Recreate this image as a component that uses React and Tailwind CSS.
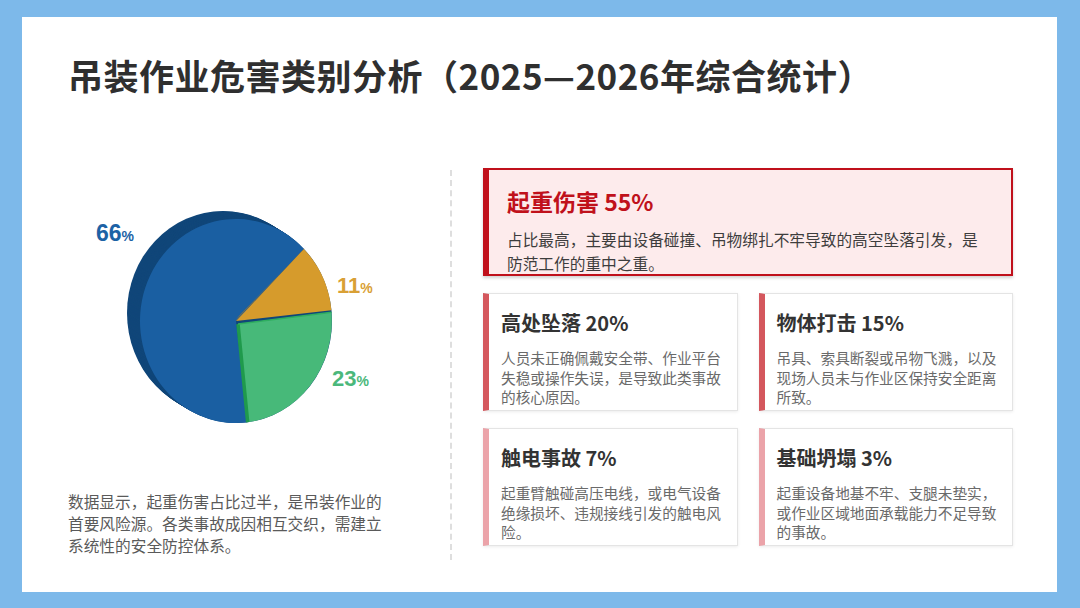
export default function App() {
  const cx = 236, cy = 321, rx = 96, ry = 102;
  const P = (deg) => {
    const t = (deg * Math.PI) / 180;
    return [cx + rx * Math.cos(t), cy + ry * Math.sin(t)];
  };
  const [a1x, a1y] = P(-45);
  const [a2x, a2y] = P(-6);
  const [a3x, a3y] = P(83);
  const steps = Array.from({ length: 14 }, (_, i) => i);

  const cards = [
    {
      t: "高处坠落 20%",
      d: ["人员未正确佩戴安全带、作业平台", "失稳或操作失误，是导致此类事故", "的核心原因。"],
      c: "border-l-[#d4575d]",
    },
    {
      t: "物体打击 15%",
      d: ["吊具、索具断裂或吊物飞溅，以及", "现场人员未与作业区保持安全距离", "所致。"],
      c: "border-l-[#d4575d]",
    },
    {
      t: "触电事故 7%",
      d: ["起重臂触碰高压电线，或电气设备", "绝缘损坏、违规接线引发的触电风", "险。"],
      c: "border-l-[#eba3a9]",
    },
    {
      t: "基础坍塌 3%",
      d: ["起重设备地基不牢、支腿未垫实，", "或作业区域地面承载能力不足导致", "的事故。"],
      c: "border-l-[#eba3a9]",
    },
  ];

  return (
    <div className="w-[1080px] h-[608px] bg-[#7db9ea] pt-[17px] pl-[22px] font-['Noto_Sans_CJK_SC','Noto_Sans',sans-serif]">
      <div className="w-[1035px] h-[575px] bg-white flex flex-col">
        <div className="pl-[46px] pt-[35px] text-[35px] leading-[46px] tracking-[0.5px] font-bold text-[#2f2f2f] whitespace-nowrap">
          吊装作业危害类别分析（2025—2026年综合统计）
        </div>
        <div className="mt-[70px] flex">
          <div className="w-[428px] flex flex-col">
            <svg
              className="ml-[38px] mt-[22px] w-[340px] h-[250px]"
              viewBox="60 190 340 250"
            >
              {steps.map((i) => (
                <ellipse
                  key={i}
                  cx={cx - 13 + i}
                  cy={cy - 8 + (i * 8) / 13}
                  rx={rx}
                  ry={ry}
                  fill="#104679"
                />
              ))}
              <path
                d={`M${cx} ${cy} L${a3x} ${a3y} A${rx} ${ry} 0 1 1 ${a1x} ${a1y} Z`}
                fill="#1a5fa2"
              />
              <path
                d={`M${cx} ${cy} L${a1x} ${a1y} A${rx} ${ry} 0 0 1 ${a2x} ${a2y} Z`}
                fill="#d69b2c"
              />
              <polygon
                points={`${cx - 1},${cy} ${a1x},${a1y} ${a1x + 4},${a1y - 4} ${cx + 3},${cy - 5}`}
                fill="#a9761f"
              />
              <path
                d={`M${cx + 2} ${cy + 3} L${a2x} ${a2y + 2} A${rx} ${ry} 0 0 1 ${a3x} ${a3y} Z`}
                fill="#47b979"
              />
              <line
                x1={cx + 2}
                y1={cy + 3}
                x2={a3x}
                y2={a3y}
                stroke="#1f9a4c"
                strokeWidth="3.5"
              />
              <line
                x1={cx + 2}
                y1={cy + 3}
                x2={a2x}
                y2={a2y + 2}
                stroke="#2fae5f"
                strokeWidth="1.5"
              />
              <text
                x="96"
                y="241"
                fill="#1c62a5"
                fontFamily="Liberation Sans, Arial, sans-serif"
                fontWeight="700"
              >
                <tspan fontSize="23">66</tspan>
                <tspan fontSize="14">%</tspan>
              </text>
              <text
                x="337"
                y="293"
                fill="#d9a035"
                fontFamily="Liberation Sans, Arial, sans-serif"
                fontWeight="700"
              >
                <tspan fontSize="22">11</tspan>
                <tspan fontSize="14">%</tspan>
              </text>
              <text
                x="332"
                y="386"
                fill="#4bb87b"
                fontFamily="Liberation Sans, Arial, sans-serif"
                fontWeight="700"
              >
                <tspan fontSize="22">23</tspan>
                <tspan fontSize="14">%</tspan>
              </text>
            </svg>
            <p className="ml-[46px] mt-[51px] w-[330px] text-[15.7px] leading-[22px] text-[#5a5a5a] whitespace-nowrap">
              数据显示，起重伤害占比过半，是吊装作业的
              <br />
              首要风险源。各类事故成因相互交织，需建立
              <br />
              系统性的安全防控体系。
            </p>
          </div>
          <div className="mt-[2px] h-[390px] border-l-2 border-dashed border-[#dedede]" />
          <div className="ml-[31px] w-[530px] flex flex-col gap-[17px]">
            <div className="h-[108px] border-2 border-l-[6px] border-[#c0101b] bg-[#fdebec] pl-[18px] pr-[10px] pt-[16px] shadow-[0_2px_3px_rgba(0,0,0,0.18)]">
              <div className="text-[23px] leading-[30px] font-bold text-[#c0111b]">
                起重伤害 55%
              </div>
              <p className="mt-[12px] text-[15.7px] leading-[24px] text-[#3d3d3d] whitespace-nowrap">
                占比最高，主要由设备碰撞、吊物绑扎不牢导致的高空坠落引发，是
                <br />
                防范工作的重中之重。
              </p>
            </div>
            <div className="grid grid-cols-2 gap-x-[21px] gap-y-[17px]">
              {cards.map((c) => (
                <div
                  key={c.t}
                  className={`h-[118px] border border-[#e4e4e4] border-l-[6px] ${c.c} bg-white pl-[12px] pr-[6px] pt-[16px] shadow-[0_1px_3px_rgba(0,0,0,0.08)]`}
                >
                  <div className="text-[20px] leading-[26px] font-bold text-[#333333]">
                    {c.t}
                  </div>
                  <p className="mt-[12px] text-[14.67px] leading-[19.5px] text-[#6a6a6a] whitespace-nowrap">
                    {c.d[0]}
                    <br />
                    {c.d[1]}
                    <br />
                    {c.d[2]}
                  </p>
                </div>
              ))}
            </div>
          </div>
        </div>
      </div>
    </div>
  );
}
